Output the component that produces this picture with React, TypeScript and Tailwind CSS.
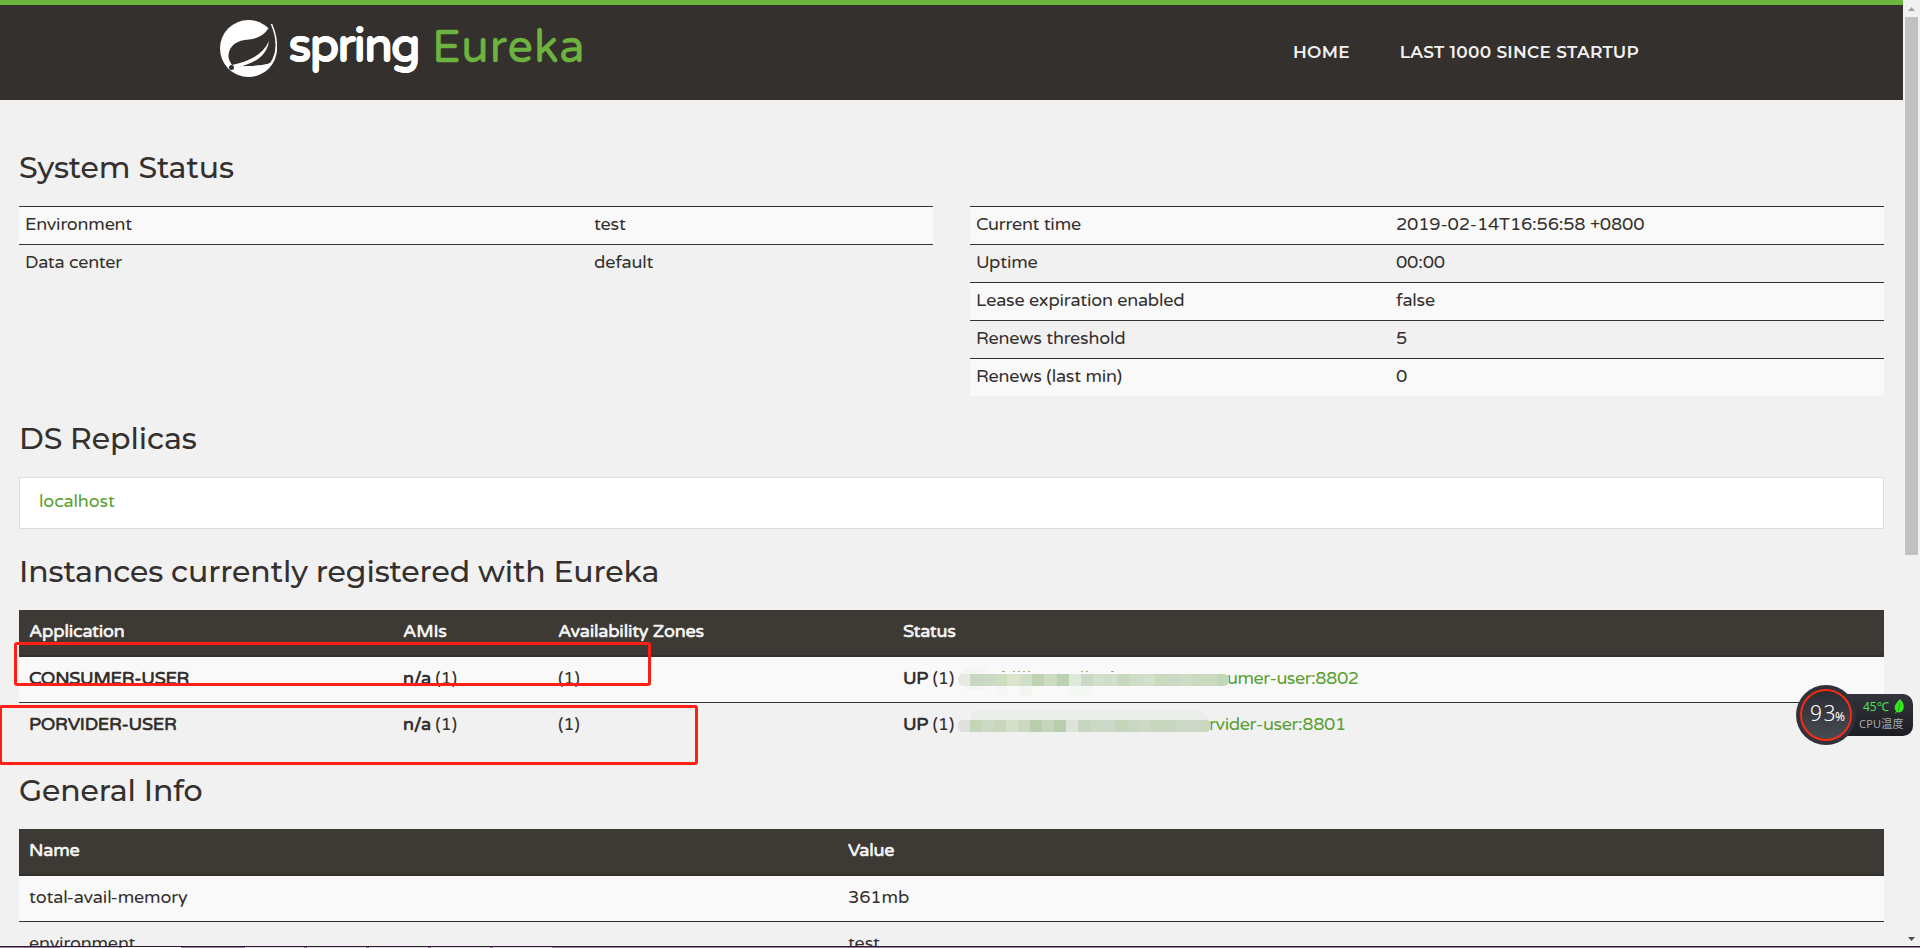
import React from "react";

const systemLeft = [
    { name: "Environment", value: "test" },
    { name: "Data center", value: "default" },
];

const systemRight = [
    { name: "Current time", value: "2019-02-14T16:56:58 +0800" },
    { name: "Uptime", value: "00:00" },
    { name: "Lease expiration enabled", value: "false" },
    { name: "Renews threshold", value: "5" },
    { name: "Renews (last min)", value: "0" },
];

const instances = [
    { app: "CONSUMER-USER", link: "umer-user:8802" },
    { app: "PORVIDER-USER", link: "rvider-user:8801" },
];

const mosaicOne = ["#e8e8e6", "#c6d8bf", "#cbdac6", "#cdddc0", "#dbe4cb", "#d1dec9", "#bdd3b2", "#ccdcc3", "#b9d2b0", "#e0e8dc", "#cbdac6", "#d2dfcc", "#d1dece", "#c7d9bd", "#cdddc7", "#d3dfcd", "#cbdabf", "#cbdac6", "#cddcc5", "#c9dac0", "#cadbbf", "#c2d7b8"];
const mosaicTwo = ["#dfe0dc", "#c3d6ba", "#cad8c4", "#c8d7bc", "#d6dfca", "#cbd8c2", "#b8ceac", "#c5d5bb", "#b7ceae", "#dce3d9", "#c6d6c0", "#ccd9c6", "#cbd7c8", "#c4d5b9", "#c8d7c1", "#cdd8c6", "#c8d6be", "#c6d6c0", "#cdd7c8", "#cdd7c8", "#c9d6c0"];

const Logo: React.FC = () => (
    <div className="flex font-['Varela_Round',sans-serif]">
        <svg className="mt-[15px] h-[57px] w-[57px]" viewBox="0 0 57 57">
            <circle cx="28.5" cy="28.5" r="28.5" fill="#fff" />
            <path d="M51.500 3 C46 14 40 18 29 19.500 C17 20 8 26 8.500 37 C9 41 11 43 12 45 C31 41 43 34 49 21 C47 36 34 44 16 47.500 C29 46 43 46 51 43 C58 32 57 18 51.500 3Z" fill="#34302d" />
            <path d="M51.500 4 C57 17 59 31 51 43 C46 48 29 46 14 47" fill="none" stroke="#fff" strokeWidth="1.500" />
            <circle cx="11.500" cy="47.500" r="2.500" fill="#34302d" />
        </svg>
        <span className="ml-[12px] mt-[12px] w-[143px] text-[46px] leading-[60px] font-bold tracking-[-1.2px] text-white [-webkit-text-stroke:0.6px_#fff]">spring</span>
        <span className="mt-[13px] text-[45px] leading-[60px] font-normal tracking-[1.1px] text-[#6db33f] [-webkit-text-stroke:0.5px_#6db33f]">Eureka</span>
    </div>
);

const Title: React.FC<{ children: React.ReactNode }> = ({ children }) => (
    <h1 className="font-['Montserrat',sans-serif] text-[30px] leading-[33px] font-medium tracking-[-0.12px]">{children}</h1>
);

const StatusTable: React.FC<{ rows: { name: string; value: string }[]; col: string }> = ({ rows, col }) => (
    <div className="flex-1 tracking-[-0.2px]">
        {rows.map((row, i) => (
            <div key={row.name} className={`flex h-[38px] border-t border-[#34302d] pt-[4px] pl-[6px] ${i % 2 === 0 ? "bg-[#f9f9f9]" : ""}`}>
                <span className={col}>{row.name}</span>
                <span>{row.value}</span>
            </div>
        ))}
    </div>
);

const CpuWidget: React.FC = () => (
    <div className="absolute left-[1796px] top-[685px] h-[60px] w-[118px]">
        <div className="absolute left-[30px] top-[9px] h-[42px] w-[87px] rounded-[10px] bg-linear-to-b from-[#33343c] to-[#1d1e23]" />
        <div className="absolute left-0 top-0 h-[60px] w-[60px] rounded-full bg-[#30313a]" />
        <div className="absolute left-[4px] top-[4px] h-[52px] w-[52px] rounded-full border-2 border-[#f42d13] bg-linear-to-b from-[#2b2c34] to-[#494b53]" />
        <span className="absolute left-[14px] top-[13px] font-['Noto_Sans',sans-serif] text-[21px] leading-[30px] font-light tracking-[1.500px] text-white">93</span>
        <span className="absolute left-[39px] top-[24px] font-['Noto_Sans',sans-serif] text-[12px] leading-[16px] text-white">%</span>
        <span className="absolute left-[67px] top-[14px] font-['Noto_Sans','Noto_Sans_CJK_SC',sans-serif] text-[12px] leading-[16px] text-[#4fe04f]">45℃</span>
        <svg className="absolute left-[98px] top-[14px] h-[16px] w-[11px]" viewBox="0 0 11 16">
            <path d="M6 0 C9 3 11 7 9 11 C8 13 5 14 3 13 L1 15 L2 12 C-1 9 1 5 6 0Z" fill="#33e81e" />
            <path d="M6 4 L4 12" stroke="#1b9c12" strokeWidth="0.800" />
        </svg>
        <span className="absolute left-[63px] top-[31px] whitespace-nowrap font-['Noto_Sans','Noto_Sans_CJK_SC',sans-serif] text-[11px] leading-[16px] tracking-[0.2px] text-[#a8a9ad]">CPU温度</span>
    </div>
);

const App: React.FC = () => {
    return (
        <div className="relative flex h-[948px] w-[1920px] flex-col overflow-hidden bg-[#f1f1f1] font-['Varela_Round','Noto_Sans',sans-serif] text-[18px] leading-[27px] text-[#34302d]">
            <div className="flex h-[946px] overflow-hidden">
                <div className="w-[1903px] shrink-0">
                    <header className="flex h-[100px] border-t-[5px] border-[#6db33f] bg-[#34302d] pl-[220px]">
                        <Logo />
                        <nav className="ml-auto mr-[264px] flex gap-[50px] pt-[34px] font-['Montserrat',sans-serif] text-[17px] font-semibold tracking-[0.27px] text-[#f1f1f1]">
                            <span>HOME</span>
                            <span>LAST 1000 SINCE STARTUP</span>
                        </nav>
                    </header>

                    <main className="px-[19px] pt-[51px]">
                        <Title>System Status</Title>
                        <div className="mt-[22px] flex h-[190px] gap-[37px]">
                            <StatusTable rows={systemLeft} col="w-[569px]" />
                            <StatusTable rows={systemRight} col="w-[420px]" />
                        </div>

                        <div className="mt-[26px]"><Title>DS Replicas</Title></div>
                        <div className="mt-[22px] h-[52px] border border-[#ddd] bg-white pt-[10px] pl-[19px] tracking-[-0.15px] text-[#5a9f32]">localhost</div>

                        <div className="mt-[26px]"><Title>Instances currently registered with Eureka</Title></div>
                        <div className="mt-[22px] grid h-[47px] grid-cols-[374px_155px_345px_1fr] border-b-2 border-[#34302d] bg-[#3d3934] pt-[8px] pl-[10px] font-bold tracking-[-0.2px] text-[#f1f1f1]">
                            <span>Application</span>
                            <span>AMIs</span>
                            <span>Availability Zones</span>
                            <span>Status</span>
                        </div>
                        {instances.map((item, i) => (
                            <div key={item.app} className={`grid h-[46px] grid-cols-[374px_155px_345px_1fr] pt-[8px] pl-[10px] tracking-[-0.3px] ${i === 0 ? "border-b border-[#34302d] bg-[#f9f9f9]" : ""}`}>
                                <span className="font-bold">{item.app}</span>
                                <span><b className="font-bold">n/a</b> (1)</span>
                                <span>(1)</span>
                                <span className="relative flex">
                                    <span className="w-[55px] shrink-0"><b className="font-bold">UP</b> (1)</span>
                                    {i === 0 ? (
                                        <>
                                            <span className="absolute left-[57px] top-[3px] h-[22px] w-[26px] rounded-l-[11px] bg-[#f5f5f4]" />
                                            <span className="absolute left-[99px] top-[6px] h-px w-[3px] bg-[#8fbd74]" />
                                            <span className="absolute left-[110px] top-[6px] h-px w-[17px] bg-[repeating-linear-gradient(90deg,#8fbd74_0_2px,transparent_2px_5px)]" />
                                            <span className="absolute left-[178px] top-[6px] h-px w-[7px] bg-[repeating-linear-gradient(90deg,#8fbd74_0_2px,transparent_2px_5px)]" />
                                            <span className="absolute left-[208px] top-[6px] h-px w-[3px] bg-[#8fbd74]" />
                                            <span className="absolute left-[93px] top-[21px] h-[10px] w-[12px] bg-[#f5f7f4]" />
                                            <span className="absolute left-[117px] top-[21px] h-[10px] w-[12px] bg-[#f2f5f0]" />
                                            <span className="absolute left-[165px] top-[21px] h-[10px] w-[24px] bg-[#f5f7f4]" />
                                        </>
                                    ) : (
                                        <span className="absolute left-[68px] top-[0px] h-[12px] w-[238px] rounded-tr-[10px] bg-[#ebedea]" />
                                    )}
                                    <span className={`relative z-10 mt-[9px] flex h-[12px] shrink-0 overflow-hidden rounded-[5px] ${i === 0 ? "w-[271px]" : "w-[253px]"}`}>
                                        {(i === 0 ? mosaicOne : mosaicTwo).map((color, j) => (
                                            <span key={j} className="h-3 flex-1" style={{ backgroundColor: color }} />
                                        ))}
                                    </span>
                                    <span className={`-ml-[2px] text-[#5a9f32] ${i === 0 ? "tracking-[-0.5px]" : "tracking-[-0.4px]"}`}>{item.link}</span>
                                </span>
                            </div>
                        ))}

                        <div className="mt-[25px]"><Title>General Info</Title></div>
                        <div className="mt-[22px] grid h-[47px] grid-cols-[819px_1fr] border-b-2 border-[#34302d] bg-[#3d3934] pt-[8px] pl-[10px] font-bold tracking-[-0.2px] text-[#f1f1f1]">
                            <span>Name</span>
                            <span>Value</span>
                        </div>
                        <div className="grid h-[46px] grid-cols-[819px_1fr] border-b border-[#34302d] bg-[#f9f9f9] pt-[8px] pl-[10px] tracking-[-0.12px]">
                            <span>total-avail-memory</span>
                            <span>361mb</span>
                        </div>
                        <div className="grid h-[46px] grid-cols-[819px_1fr] pt-[8px] pl-[10px] tracking-[-0.15px]">
                            <span>environment</span>
                            <span>test</span>
                        </div>
                    </main>
                </div>

                {/* scrollbar */}
                <div className="flex w-[17px] flex-col items-center bg-[#f1f1f1]">
                    <svg className="h-[17px] w-[17px]" viewBox="0 0 17 17"><path d="M5 11 L8.500 7 L12 11Z" fill="#a3a3a3" /></svg>
                    <div className="h-[538px] w-[13px] bg-[#c1c1c1]" />
                    <svg className="mt-auto h-[17px] w-[17px]" viewBox="0 0 17 17"><path d="M5 8 L8.500 12 L12 8Z" fill="#505050" /></svg>
                </div>
            </div>
            {/* top edge of the taskbar */}
            <div className="flex h-[2px] gap-[3px] border-t border-[#2d1733] bg-[#9d7f9f] pl-[60px]">
                <div className="w-[59px] bg-[#e4dce6]" />
                <div className="w-[59px] bg-white" />
                <div className="ml-[61px] w-[59px] bg-[#e4dce6]" />
                <div className="w-[59px] bg-[#e4dce6]" />
                <div className="w-[59px] bg-[#e4dce6]" />
                <div className="w-[59px] bg-[#e4dce6]" />
                <div className="w-[59px] bg-[#e4dce6]" />
            </div>

            {/* marked rows */}
            <div className="absolute left-[14px] top-[642px] h-[44px] w-[637px] rounded-[3px] border-3 border-[#ff1f14]" />
            <div className="absolute left-[-1px] top-[705px] h-[60px] w-[699px] rounded-[3px] border-3 border-[#ff1f14]" />

            <CpuWidget />
        </div>
    );
};

export default App;
